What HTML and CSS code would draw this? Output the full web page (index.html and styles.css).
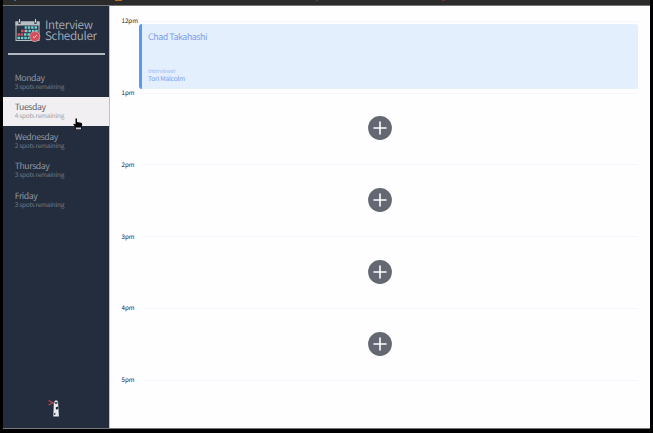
FILE: index.html
```html
<!DOCTYPE html>
<html lang="en">
<head>
<meta charset="utf-8">
<title>Interview Scheduler</title>
<link rel="stylesheet" href="styles.css">
</head>
<body>
<div class="window">
  <div class="toolbar"><i class="tab-blue"></i><i class="tab-orange"></i><i class="tab-grey"></i><i class="tab-red"></i></div>
  <main class="layout">
    <section class="sidebar">
      <div class="brand">
        <svg class="logo" viewBox="0 0 26 24">
          <rect x="1" y="3" width="23" height="18.500" fill="#263140" stroke="#b9c0c6"/>
          <path d="M.5 2.500h24v4H.5z" fill="#b9bec4"/>
          <path d="M4.500 1v4M20.500 1v4" stroke="#34404e" stroke-width="2.200"/>
          <path d="M4.500 0v3.500M20.500 0v3.500" stroke="#d5d9dc"/>
          <path d="M2.500 8.500h20.500M10 12h13M9 15.500h6M2.500 19h12" stroke="#70d3d4" stroke-width="2.500" stroke-dasharray="2.500 .9"/>
          <path d="M2 8.500h7.500" stroke="#263140" stroke-width="2.700"/>
          <path d="M6 12h4M2.500 15.500h6" stroke="#db4c5c" stroke-width="2.700" stroke-dasharray="2.600 .6"/>
          <circle cx="19.800" cy="17.500" r="5" fill="#d94d5b" stroke="#bd9da5"/>
          <path d="M18 17.500l1.300 1.200 2.500-2.700" fill="none" stroke="#f3d5d9"/>
        </svg>
        <h1><span>Interview</span><span>Scheduler</span></h1>
      </div>
      <hr class="separator">
      <ul class="days">
        <li><h2>Monday</h2><p>3 spots remaining</p></li>
        <li class="selected"><h2>Tuesday</h2><p>4 spots remaining</p>
          <svg class="cursor" viewBox="0 0 10 12"><path d="M2.500.5q1-.7 1.500.5v3l4 .8q1.300.2 1.200 1.700L8.500 9v2.500h-6V9L.3 6.500q.3-1.500 2.200-.1z" fill="#050507"/><path d="M3 9.500h5v1.800H3z" fill="#d7cbd0"/></svg>
        </li>
        <li><h2>Wednesday</h2><p>2 spots remaining</p></li>
        <li><h2>Thursday</h2><p>3 spots remaining</p></li>
        <li><h2>Friday</h2><p>3 spots remaining</p></li>
      </ul>
      <svg class="lighthouse" viewBox="0 0 12 18"><path d="M.5 1.500l4.500 2.300L.5 6" fill="none" stroke="#c74855" stroke-width="1.100"/><path d="M5.800 4h4.300l.8 13.500H5.300z" fill="#e7eaec"/><path d="M5.700 3.500Q8.200-1 10.500 3.500z" fill="#d5dade"/><path d="M7 3.800h2.300v1H7zM7.800 8.300l2.200-.5.1 2-2.100 1zM6 14.500l1.500-.6v1.300l-1.600.8z" fill="#18212e"/></svg>
    </section>
    <section class="schedule">
      <article class="slot">
        <header><span>12pm</span><hr></header>
        <div class="card"><h2>Chad Takahashi</h2><div><h4>Interviewer</h4><h3>Tori Malcolm</h3></div></div>
      </article>
      <article class="slot"><header><span>1pm</span><hr></header><div class="empty"><svg viewBox="0 0 24 24"><circle cx="12" cy="12" r="11.900"/><path d="M12 6v12M6 12h12"/></svg></div></article>
      <article class="slot"><header><span>2pm</span><hr></header><div class="empty"><svg viewBox="0 0 24 24"><circle cx="12" cy="12" r="11.900"/><path d="M12 6v12M6 12h12"/></svg></div></article>
      <article class="slot"><header><span>3pm</span><hr></header><div class="empty"><svg viewBox="0 0 24 24"><circle cx="12" cy="12" r="11.900"/><path d="M12 6v12M6 12h12"/></svg></div></article>
      <article class="slot"><header><span>4pm</span><hr></header><div class="empty"><svg viewBox="0 0 24 24"><circle cx="12" cy="12" r="11.900"/><path d="M12 6v12M6 12h12"/></svg></div></article>
      <article class="slot last"><header><span>5pm</span><hr></header></article>
    </section>
  </main>
</div>
</body>
</html>
```
FILE: styles.css
```css
* { box-sizing: border-box; margin: 0; padding: 0; }
body { background: #000; font-family: "Noto Sans CJK SC", "Noto Sans", sans-serif; overflow: hidden; text-rendering: geometricPrecision; }
h1, h2, h3, h4 { font-weight: 400; }
.window { width: 647px; height: 429px; margin-left: 3px; display: flex; flex-direction: column; }
.toolbar { height: 6px; flex: none; background: #2b2b2b; border-bottom: 1px solid #777; display: flex; }
.toolbar i { height: 1px; flex: none; }
.tab-blue { width: 2px; margin-left: 11px; background: #416b91; }
.tab-orange { width: 7px; margin-left: 99px; background: #b66c1c; }
.tab-grey { width: 2px; margin-left: 194px; background: #4b4b4b; }
.tab-red { width: 3px; margin-left: 124px; background: #702e3d; }
.layout { flex: 1; display: flex; min-height: 0; border-bottom: 1px solid #77777b; }
.sidebar { width: 107px; flex: none; background: #232d3e; border-right: 1px solid #bfc2cb; display: flex; flex-direction: column; }
.brand { display: flex; padding: 13px 0 0 12px; height: 46px; }
.logo { width: 26px; height: 24px; flex: none; }
.brand h1 { margin: 1px 0 0 4px; font-size: 11.700px; line-height: 10.500px; letter-spacing: -.33px; color: #a5aeb8; font-weight: 350; white-space: nowrap; }
.brand h1 span { display: block; }
.separator { border: 0; height: 2px; margin: 1px 4px 0 5px; background: #b2b7c0; flex: none; }
.days { list-style: none; margin-top: 12.200px; }
.days li { position: relative; height: 29.600px; padding: 4.500px 0 0 11.700px; color: #8e99a6; white-space: nowrap; }
.days h2 { font-size: 8.700px; line-height: 11px; letter-spacing: -.4px; }
.days p { font-size: 6.500px; line-height: 7px; letter-spacing: -.25px; color: #6d7885; }
.days .selected { background: #f1eff1; color: #59616c; }
.days .selected p { color: #a3a3a9; }
.cursor { position: absolute; width: 10px; height: 12px; left: 70px; top: 21px; z-index: 1; }
.lighthouse { width: 12px; height: 18px; margin: auto 0 11px 45px; }
.schedule { flex: 1; background: #fefdff; padding: 11.300px 12px 0 11.500px; }
.slot { height: 71.800px; }
.slot.last { height: 20px; }
.slot header { height: 8px; display: flex; align-items: center; }
.slot header span { width: 20.500px; font-size: 6.200px; line-height: 8px; color: #222228; }
.slot hr { flex: 1; border: 0; height: 1px; background: #f7f6f9; }
.card { height: 65px; margin: -1.300px 0 0 17.500px; border-left: 3px solid #559cf1; border-radius: 3px; background: #e3effc; padding: 6px 6px 6.700px; display: flex; flex-direction: column; justify-content: space-between; color: #7f9def; }
.card h2 { font-size: 8.900px; line-height: 13px; letter-spacing: -.45px; }
.card h4 { font-size: 5.700px; line-height: 7px; letter-spacing: -.25px; color: #a4b9f5; }
.card h3 { font-size: 6.600px; line-height: 8px; letter-spacing: -.2px; }
.empty { height: 62.600px; display: flex; align-items: center; justify-content: center; }
.empty svg { width: 24px; height: 24px; }
.empty circle { fill: #646872; }
.empty path { fill: none; stroke: #fff; stroke-width: 1.600; stroke-linecap: round; }
```
